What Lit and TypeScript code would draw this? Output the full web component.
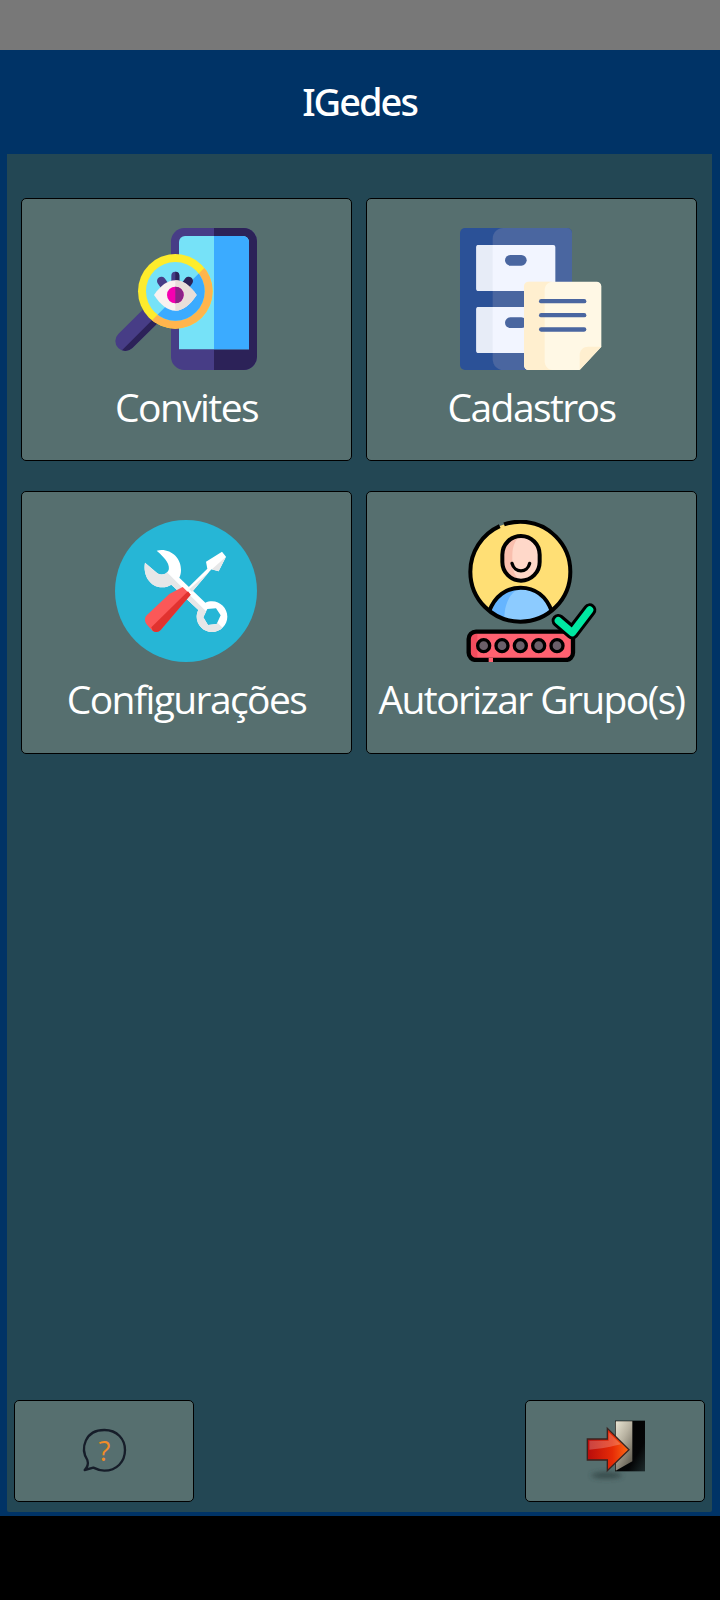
import { LitElement, html, css, svg } from "lit";
import { customElement } from "lit/decorators.js";

const convites = svg`
  <defs>
    <clipPath id="cvR"><rect x="342" y="0" width="200" height="500"/></clipPath>
    <clipPath id="cvHalf"><rect x="226" y="100" width="120" height="220"/></clipPath>
    <clipPath id="cvSoft"><polygon points="20,452 330,142 520,330 210,640"/></clipPath>
  </defs>
  <rect x="213" y="39" width="258" height="426" rx="40" fill="#473d86"/>
  <rect x="213" y="39" width="258" height="426" rx="40" fill="#2c2258" clip-path="url(#cvR)"/>
  <path d="M255 63H429a18 18 0 0 1 18 18V403H237V81a18 18 0 0 1 18-18Z" fill="#76e2f8"/>
  <path d="M255 63H429a18 18 0 0 1 18 18V403H237V81a18 18 0 0 1 18-18Z" fill="#3babff" clip-path="url(#cvR)"/>
  <line x1="76" y1="378" x2="175" y2="280" stroke="#473d86" stroke-width="60" stroke-linecap="round"/>
  <line x1="76" y1="378" x2="175" y2="280" stroke="#2c2258" stroke-width="60" stroke-linecap="round" clip-path="url(#cvSoft)"/>
  <circle cx="226" cy="229" r="112" fill="#feec2c"/>
  <circle cx="226" cy="229" r="112" fill="#ffb54d" clip-path="url(#cvSoft)"/>
  <circle cx="226" cy="229" r="88" fill="#76e2f8"/>
  <circle cx="226" cy="229" r="88" fill="#3babff" clip-path="url(#cvSoft)"/>
  <line x1="226" y1="182" x2="226" y2="200" stroke="#473d86" stroke-width="24" stroke-linecap="round"/>
  <line x1="226" y1="182" x2="226" y2="200" stroke="#2c2258" stroke-width="24" stroke-linecap="round" clip-path="url(#cvHalf)" />
  <line x1="184" y1="198" x2="194" y2="212" stroke="#473d86" stroke-width="26" stroke-linecap="round"/>
  <line x1="266" y1="198" x2="256" y2="212" stroke="#2c2258" stroke-width="26" stroke-linecap="round"/>
  <path d="M162 240C182 212 202 196 226 196S270 212 290 240C270 270 250 287 226 287S182 270 162 240Z" fill="#f9f2f0"/>
  <path d="M226 196C250 196 270 212 290 240C270 270 250 287 226 287Z" fill="#e8ded9"/>
  <circle cx="226" cy="240" r="25" fill="#f500b0"/>
  <path d="M226 215a25 25 0 0 1 0 50Z" fill="#8a2387"/>
`;

const cadastros = svg`
  <rect x="46" y="39" width="336" height="426" rx="15" fill="#2b5197"/>
  <path d="M176 39H367a15 15 0 0 1 15 15V450a15 15 0 0 1-15 15H176a32 32 0 0 1-32-32V71a32 32 0 0 1 32-32Z" fill="#4a66a0"/>
  <rect x="95" y="90" width="237" height="138" rx="6" fill="#f2f5ff"/>
  <path d="M101 90H144V228H101a6 6 0 0 1-6-6V96a6 6 0 0 1 6-6Z" fill="#e7ecf7"/>
  <rect x="95" y="276" width="237" height="138" rx="6" fill="#f2f5ff"/>
  <path d="M101 276H144V414H101a6 6 0 0 1-6-6V282a6 6 0 0 1 6-6Z" fill="#e7ecf7"/>
  <rect x="181" y="120" width="65" height="32" rx="16" fill="#4a66a0"/>
  <rect x="181" y="307" width="65" height="32" rx="16" fill="#4a66a0"/>
  <path d="M252 200H456a14 14 0 0 1 14 14V395L405 465H252a14 14 0 0 1-14-14V214a14 14 0 0 1 14-14Z" fill="#fff8e5"/>
  <path d="M252 200H324C310 200 300 212 300 226V439C300 453 310 465 324 465H252a14 14 0 0 1-14-14V214a14 14 0 0 1 14-14Z" fill="#ffefcf"/>
  <rect x="283" y="252" width="142" height="13" rx="6.5" fill="#4a66a0"/>
  <rect x="283" y="294" width="142" height="13" rx="6.5" fill="#4a66a0"/>
  <rect x="283" y="337" width="142" height="13" rx="6.5" fill="#4a66a0"/>
  <path d="M405 465V420C405 405 416 395 431 395H470Z" fill="#ffefcf"/>
`;

const config = svg`
  <defs>
    <clipPath id="wrLow"><polygon points="40,26 520,506 40,506"/></clipPath>
    <path id="wrench" fill-rule="evenodd" d="M170 122C208 112 244 142 243 180C243 190 241 197 238 203L316 278C322 275 329 274 336 274C361 274 382 295 382 320C382 345 361 366 336 366C311 366 290 345 290 320C290 313 292 306 295 300L214 224C206 229 197 232 187 232C150 232 128 195 135 158L172 190C184 198 200 193 206 180C210 165 200 148 170 122ZM322 297L348 295L362 316L350 342L324 345L310 322Z"/>
  </defs>
  <circle cx="258" cy="243" r="213" fill="#26b6d6"/>
  <use href="#wrench" fill="#ffffff"/>
  <use href="#wrench" fill="#e6e7e8" clip-path="url(#wrLow)"/>
  <path d="M264 233L322 176L318 155L366 125L378 140L356 184L334 178L276 246Z" fill="#ffffff"/>
  <path d="M378 140L356 184L334 178L276 246L268 238L378 140Z" fill="#e6e7e8"/>
  <path d="M248 231L272 254L182 360C174 368 162 368 155 360L141 344C133 336 133 322 141 315L208 252Z" fill="#fb5858"/>
  <path d="M272 254L182 360C176 367 166 368 158 362L154 352L264 244Z" fill="#e1322f"/>
`;

const autorizar = svg`
  <defs>
    <clipPath id="auCircle"><circle cx="212" cy="185" r="150"/></clipPath>
    <clipPath id="auBar"><rect x="57" y="365" width="313" height="85" rx="22"/></clipPath>
  </defs>
  <circle cx="212" cy="185" r="150" fill="#ffdf75"/>
  <g clip-path="url(#auCircle)">
    <path d="M122 330C125 270 165 233 213 233S300 270 305 330Z" fill="#8ccbff"/>
    <path d="M122 330C125 270 165 233 213 233C190 240 160 275 165 335Z" fill="#66b5ff"/>
    <path d="M118 305C135 258 170 233 213 233S290 258 307 305" fill="none" stroke="#000" stroke-width="12" stroke-linecap="round"/>
  </g>
  <circle cx="212" cy="185" r="150" fill="none" stroke="#000" stroke-width="12" stroke-dasharray="642 14 286"/>
  <rect x="158" y="78" width="112" height="134" rx="56" fill="#ffd8c9"/>
  <path d="M214 78C180 78 158 102 158 134V156C158 188 180 212 214 212C198 205 188 180 188 156V134C188 110 198 85 214 78Z" fill="#f9bfae"/>
  <rect x="158" y="78" width="112" height="134" rx="56" fill="none" stroke="#000" stroke-width="12"/>
  <path d="M187 160C195 190 233 190 240 160" fill="none" stroke="#000" stroke-width="10" stroke-linecap="round"/>
  <rect x="57" y="365" width="313" height="85" rx="22" fill="#ff6170"/>
  <rect x="57" y="365" width="26" height="85" fill="#f24c5e" clip-path="url(#auBar)"/>
  <rect x="57" y="365" width="313" height="85" rx="22" fill="none" stroke="#000" stroke-width="13"/>
  <line x1="117" y1="450" x2="130" y2="450" stroke="#ff6170" stroke-width="13"/>
  ${[102, 157, 212, 267, 322].map(
    (x) => svg`<circle cx=${x} cy="407" r="18" fill="#6a5f69" stroke="#000" stroke-width="10"/>`
  )}
  <polyline points="326,332 368,368 420,300" fill="none" stroke="#000" stroke-width="40" stroke-linecap="round" stroke-linejoin="round"/>
  <polyline points="326,332 368,368 420,300" fill="none" stroke="#00e8a2" stroke-width="22" stroke-linecap="round" stroke-linejoin="round"/>
`;

const help = svg`
  <path d="M262 240C240 205 255 150 313 150C352 150 375 178 375 210C375 245 350 272 313 272C300 272 290 268 280 263L254 270C262 262 266 252 262 240Z" fill="none" stroke="#161d29" stroke-width="7" stroke-linejoin="round"/>
  <text x="313" y="242" text-anchor="middle" class="q">?</text>
`;

const exitIcon = svg`
  <defs>
    <linearGradient id="exFrame" x1="0" y1="0" x2="1" y2="1">
      <stop offset="0" stop-color="#000"/><stop offset="0.7" stop-color="#050607"/><stop offset="1" stop-color="#1d2b2c"/>
    </linearGradient>
    <linearGradient id="exDoor" x1="0" y1="0" x2="0.6" y2="1">
      <stop offset="0" stop-color="#e9e5d3"/><stop offset="0.45" stop-color="#b9b3a2"/><stop offset="1" stop-color="#686357"/>
    </linearGradient>
    <linearGradient id="exArrow" x1="0" y1="0" x2="1" y2="0">
      <stop offset="0" stop-color="#b80c0c"/><stop offset="0.6" stop-color="#e62b06"/><stop offset="1" stop-color="#ff6a14"/>
    </linearGradient>
    <filter id="exBlur" x="-50%" y="-100%" width="200%" height="300%"><feGaussianBlur stdDeviation="8"/></filter>
  </defs>
  <ellipse cx="320" cy="287" rx="46" ry="9" fill="#2c3c3e" opacity="0.75" filter="url(#exBlur)"/>
  <rect x="345" y="123" width="90" height="152" fill="url(#exFrame)"/>
  <polygon points="347,125 397,125 397,245 347,273" fill="url(#exDoor)"/>
  <polygon points="262,178 322,178 322,146 387,210 322,273 322,241 262,241" fill="url(#exArrow)" stroke="#3a2320" stroke-width="4" stroke-linejoin="miter"/>
  <path d="M268 183H326V158L362 194C340 200 300 208 268 210Z" fill="#fff" opacity="0.22"/>
`;

@customElement("app-root")
export class AppRoot extends LitElement {
  static styles = css`
    :host {
      display: flex;
      flex-direction: column;
      height: 1600px;
      background: #000;
      font-family: "Open Sans", "Noto Sans", sans-serif;
      color: #fff;
    }
    .status {
      height: 50px;
      background: #787878;
    }
    .shell {
      height: 1466px;
      background: #003366;
      display: flex;
      flex-direction: column;
      padding: 0 8px 4px 7px;
      box-sizing: border-box;
    }
    .title {
      height: 104px;
      flex: none;
      display: flex;
      align-items: center;
      justify-content: center;
      padding-bottom: 2px;
      box-sizing: border-box;
      font-family: "Noto Sans", sans-serif;
      font-weight: 500;
      font-size: 38px;
      letter-spacing: -2px;
      line-height: 1;
    }
    .panel {
      flex: 1;
      background: #234754;
      border-radius: 0 0 2px 2px;
      display: flex;
      flex-direction: column;
      justify-content: space-between;
      padding: 44.33px 7px 10px;
    }
    .grid {
      display: grid;
      grid-template-columns: 331px 331px;
      column-gap: 14px;
      row-gap: 30px;
      padding: 0 7px;
    }
    .card {
      box-sizing: border-box;
      height: 262.6px;
      border: 1px solid #000;
      border-radius: 5px;
      background: #566f6f;
      display: flex;
      flex-direction: column;
      align-items: center;
      padding-top: 28.47px;
    }
    .icon {
      width: 142px;
      height: 142px;
      display: block;
      flex: none;
      margin-right: 1px;
    }
    .label {
      margin-top: 13px;
      font-size: 39px;
      font-weight: 500;
      line-height: 48px;
      letter-spacing: -1.6px;
      white-space: nowrap;
    }
    .footer {
      display: flex;
      justify-content: space-between;
    }
    .btn {
      box-sizing: border-box;
      width: 180px;
      height: 102px;
      border: 1px solid #000;
      border-radius: 5px;
      background: #566f6f;
      display: flex;
      align-items: center;
      justify-content: center;
    }
    .help {
      width: 48px;
      height: 48px;
    }
    .exit {
      width: 66px;
      height: 66px;
    }
    .q {
      font-family: "Open Sans", sans-serif;
      font-weight: 400;
      font-size: 82px;
      fill: #f28c28;
    }
  `;

  render() {
    const cards = [
      { label: "Convites", box: "45 39 426 426", art: convites },
      { label: "Cadastros", box: "46 39 426 426", art: cadastros },
      { label: "Configurações", box: "45 30 426 426", art: config },
      { label: "Autorizar Grupo(s)", box: "31 30 426 426", art: autorizar },
    ];
    return html`
      <div class="status"></div>
      <div class="shell">
        <div class="title">IGedes</div>
        <div class="panel">
          <div class="grid">
            ${cards.map(
              (c) => html`<div class="card">
                <svg class="icon" viewBox=${c.box}>${c.art}</svg>
                <div class="label">${c.label}</div>
              </div>`
            )}
          </div>
          <div class="footer">
            <div class="btn"><svg class="help" viewBox="240 141 144 144">${help}</svg></div>
            <div class="btn"><svg class="exit" viewBox="246 115 198 198">${exitIcon}</svg></div>
          </div>
        </div>
      </div>
    `;
  }
}
